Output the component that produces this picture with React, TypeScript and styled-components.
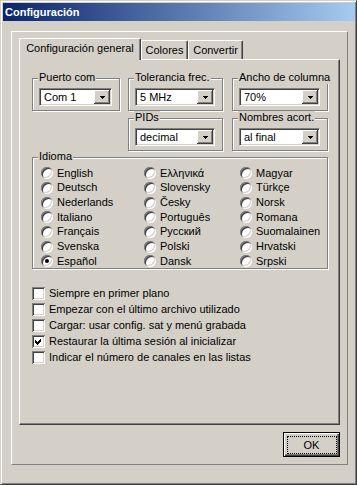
import React from 'react';
import styled, { createGlobalStyle } from 'styled-components';

const GlobalStyle = createGlobalStyle`
  html, body { margin: 0; padding: 0; background: #d4d0c8; }
  body {
    font-family: "Liberation Sans", Arial, sans-serif;
    font-size: 11px;
    line-height: 13px;
    color: #000;
  }
  * { box-sizing: border-box; }
`;

const Window = styled.div`
  width: 357px;
  height: 485px;
  background: #d4d0c8;
  border: 1px solid;
  border-color: #d4d0c8 #404040 #404040 #d4d0c8;
  box-shadow: inset 1px 1px 0 #ffffff, inset -1px -1px 0 #808080;
  padding: 2px 1px 2px 2px;
  display: flex;
  flex-direction: column;
`;

const TitleBar = styled.div`
  height: 18px;
  flex: none;
  background: linear-gradient(to right, #0a246a, #a6caf0);
  color: #fff;
  font-weight: bold;
  font-size: 11px;
  display: flex;
  align-items: center;
  padding-left: 2px;
`;

const Body = styled.div`
  padding: 10px 7px 0 8px;
`;

const Panel = styled.div`
  width: 337px;
  height: 434px;
  border: 1px solid;
  border-color: #ffffff #808080 #808080 #ffffff;
  padding: 6px 7px 7px 7px;
  display: flex;
  flex-direction: column;
`;

const TabStrip = styled.div`
  display: flex;
  align-items: flex-end;
  height: 21px;
  flex: none;
`;

const Tab = styled.div<{ $active?: boolean; $w: number }>`
  width: ${(p) => p.$w}px;
  height: ${(p) => (p.$active ? 22 : 19)}px;
  margin-bottom: ${(p) => (p.$active ? -1 : 0)}px;
  position: relative;
  z-index: ${(p) => (p.$active ? 2 : 1)};
  background: #d4d0c8;
  border-top: 1px solid #ffffff;
  border-left: 1px solid #ffffff;
  border-right: 1px solid #404040;
  box-shadow: inset -1px 0 0 #808080;
  border-radius: 2px 2px 0 0;
  display: flex;
  align-items: center;
  justify-content: center;
  white-space: nowrap;
  padding: ${(p) => (p.$active ? '0 0 2px 0' : '1px 0 0 0')};
`;

const TabPage = styled.div`
  height: 366px;
  flex: none;
  border: 1px solid;
  border-color: #ffffff #404040 #404040 #ffffff;
  box-shadow: inset -1px -1px 0 #808080;
  padding: 18px 0 0 12px;
  display: flex;
  flex-direction: column;
`;

const GroupGrid = styled.div`
  display: grid;
  grid-template-columns: 96px 104px 96px;
  grid-template-rows: 33px 33px;
  row-gap: 7px;
`;

const GroupBox = styled.div<{ $w: number; $h?: number; $col?: number; $row?: number }>`
  position: relative;
  width: ${(p) => p.$w}px;
  height: ${(p) => p.$h ?? 33}px;
  border: 1px solid #808080;
  box-shadow: inset 1px 1px 0 #ffffff, 1px 1px 0 #ffffff;
  ${(p) => (p.$col ? `grid-column: ${p.$col};` : '')}
  ${(p) => (p.$row ? `grid-row: ${p.$row};` : '')}
  padding: 9px 7px 0 6px;
`;

const GroupLabel = styled.span`
  position: absolute;
  top: -8px;
  left: 5px;
  padding: 0 1px;
  background: #d4d0c8;
  line-height: 13px;
  white-space: nowrap;
`;

const Combo = styled.div`
  height: 18px;
  width: 100%;
  display: flex;
  align-items: stretch;
  background: #ffffff;
  border: 1px solid;
  border-color: #808080 #ffffff #ffffff #808080;
  box-shadow: inset 1px 1px 0 #404040, inset -1px -1px 0 #d4d0c8;
  padding: 1px;
`;

const ComboText = styled.span`
  flex: 1;
  display: flex;
  align-items: center;
  padding-left: 3px;
  white-space: nowrap;
  overflow: hidden;
`;

const ComboButton = styled.span`
  width: 16px;
  flex: none;
  background: #d4d0c8;
  box-shadow: inset -1px -1px 0 #404040, inset 1px 1px 0 #ffffff, inset -2px -2px 0 #808080;
  display: flex;
  align-items: center;
  justify-content: center;
`;

const LangGroup = styled(GroupBox)`
  margin-top: 6px;
  padding: 8px 0 0 8px;
`;

const RadioGrid = styled.div`
  display: grid;
  grid-template-columns: 103px 96px 1fr;
  grid-auto-flow: column;
  grid-template-rows: repeat(7, 14.67px);
`;

const RadioItem = styled.label`
  display: flex;
  align-items: center;
  gap: 4px;
  white-space: nowrap;
`;

const RadioCircle = styled.span<{ $checked?: boolean }>`
  position: relative;
  width: 12px;
  height: 12px;
  flex: none;
  border-radius: 50%;
  background: #ffffff;
  box-shadow: inset 1px 1px 0 0 #808080, inset -1px -1px 0 0 #ffffff,
    inset 2px 2px 0 0 #404040, inset -2px -2px 0 0 #d4d0c8;
  &::after {
    content: '';
    display: ${(p) => (p.$checked ? 'block' : 'none')};
    position: absolute;
    left: 4px;
    top: 4px;
    width: 4px;
    height: 4px;
    border-radius: 50%;
    background: #000;
  }
`;

const CheckList = styled.div`
  margin-top: 16px;
  display: flex;
  flex-direction: column;
`;

const CheckRow = styled.label`
  height: 16px;
  display: flex;
  align-items: center;
  gap: 4px;
  white-space: nowrap;
`;

const CheckBox = styled.span`
  width: 13px;
  height: 13px;
  flex: none;
  background: #ffffff;
  box-shadow: inset 1px 1px 0 0 #808080, inset -1px -1px 0 0 #ffffff,
    inset 2px 2px 0 0 #404040, inset -2px -2px 0 0 #d4d0c8;
  display: block;
`;

const ButtonRow = styled.div`
  margin-top: 7px;
  display: flex;
  justify-content: flex-end;
`;

const DefaultButton = styled.button`
  position: relative;
  width: 57px;
  height: 25px;
  padding: 0;
  margin: 0;
  background: #d4d0c8;
  border: 1px solid #000;
  box-shadow: inset 1px 1px 0 #ffffff, inset -1px -1px 0 #404040, inset -2px -2px 0 #808080;
  font-family: "Liberation Sans", Arial, sans-serif;
  font-size: 11px;
  color: #000;
  &::after {
    content: '';
    position: absolute;
    left: 3px;
    top: 3px;
    right: 2px;
    bottom: 2px;
    border: 1px dotted #000;
  }
`;

const Arrow = () => (
  <svg width="5" height="3" viewBox="0 0 5 3" shapeRendering="crispEdges">
    <polygon points="0,0 5,0 2.5,3" fill="#000" />
  </svg>
);

const Check = () => (
  <svg width="13" height="13" viewBox="0 0 13 13" shapeRendering="crispEdges">
    <polygon points="3,5 5,7 9,3 9,6 5,10 3,8" fill="#000" />
  </svg>
);

const languages: [string, boolean][] = [
  ['English', false],
  ['Deutsch', false],
  ['Nederlands', false],
  ['Italiano', false],
  ['Français', false],
  ['Svenska', false],
  ['Español', true],
  ['Ελληνικά', false],
  ['Slovensky', false],
  ['Česky', false],
  ['Português', false],
  ['Русский', false],
  ['Polski', false],
  ['Dansk', false],
  ['Magyar', false],
  ['Türkçe', false],
  ['Norsk', false],
  ['Romana', false],
  ['Suomalainen', false],
  ['Hrvatski', false],
  ['Srpski', false],
];

const options: [string, boolean][] = [
  ['Siempre en primer plano', false],
  ['Empezar con el último archivo utilizado', false],
  ['Cargar: usar config. sat y menú grabada', false],
  ['Restaurar la última sesión al inicializar', true],
  ['Indicar el número de canales en las listas', false],
];

const ComboField = ({ value }: { value: string }) => (
  <Combo>
    <ComboText>{value}</ComboText>
    <ComboButton>
      <Arrow />
    </ComboButton>
  </Combo>
);

export default function App() {
  return (
    <>
      <GlobalStyle />
      <Window>
        <TitleBar>Configuración</TitleBar>
        <Body>
          <Panel>
            <TabStrip>
              <Tab $active $w={122}>Configuración general</Tab>
              <Tab $w={47}>Colores</Tab>
              <Tab $w={55}>Convertir</Tab>
            </TabStrip>
            <TabPage>
              <GroupGrid>
                <GroupBox $w={88}>
                  <GroupLabel>Puerto com</GroupLabel>
                  <ComboField value="Com 1" />
                </GroupBox>
                <GroupBox $w={95}>
                  <GroupLabel>Tolerancia frec.</GroupLabel>
                  <ComboField value="5 MHz" />
                </GroupBox>
                <GroupBox $w={96}>
                  <GroupLabel>Ancho de columna</GroupLabel>
                  <ComboField value="70%" />
                </GroupBox>
                <GroupBox $w={95} $col={2} $row={2}>
                  <GroupLabel>PIDs</GroupLabel>
                  <ComboField value="decimal" />
                </GroupBox>
                <GroupBox $w={96} $col={3} $row={2}>
                  <GroupLabel>Nombres acort.</GroupLabel>
                  <ComboField value="al final" />
                </GroupBox>
              </GroupGrid>
              <LangGroup $w={296} $h={112}>
                <GroupLabel>Idioma</GroupLabel>
                <RadioGrid>
                  {languages.map(([name, checked]) => (
                    <RadioItem key={name}>
                      <RadioCircle $checked={checked} />
                      {name}
                    </RadioItem>
                  ))}
                </RadioGrid>
              </LangGroup>
              <CheckList>
                {options.map(([text, checked]) => (
                  <CheckRow key={text}>
                    <CheckBox>{checked && <Check />}</CheckBox>
                    {text}
                  </CheckRow>
                ))}
              </CheckList>
            </TabPage>
            <ButtonRow>
              <DefaultButton>OK</DefaultButton>
            </ButtonRow>
          </Panel>
        </Body>
      </Window>
    </>
  );
}
